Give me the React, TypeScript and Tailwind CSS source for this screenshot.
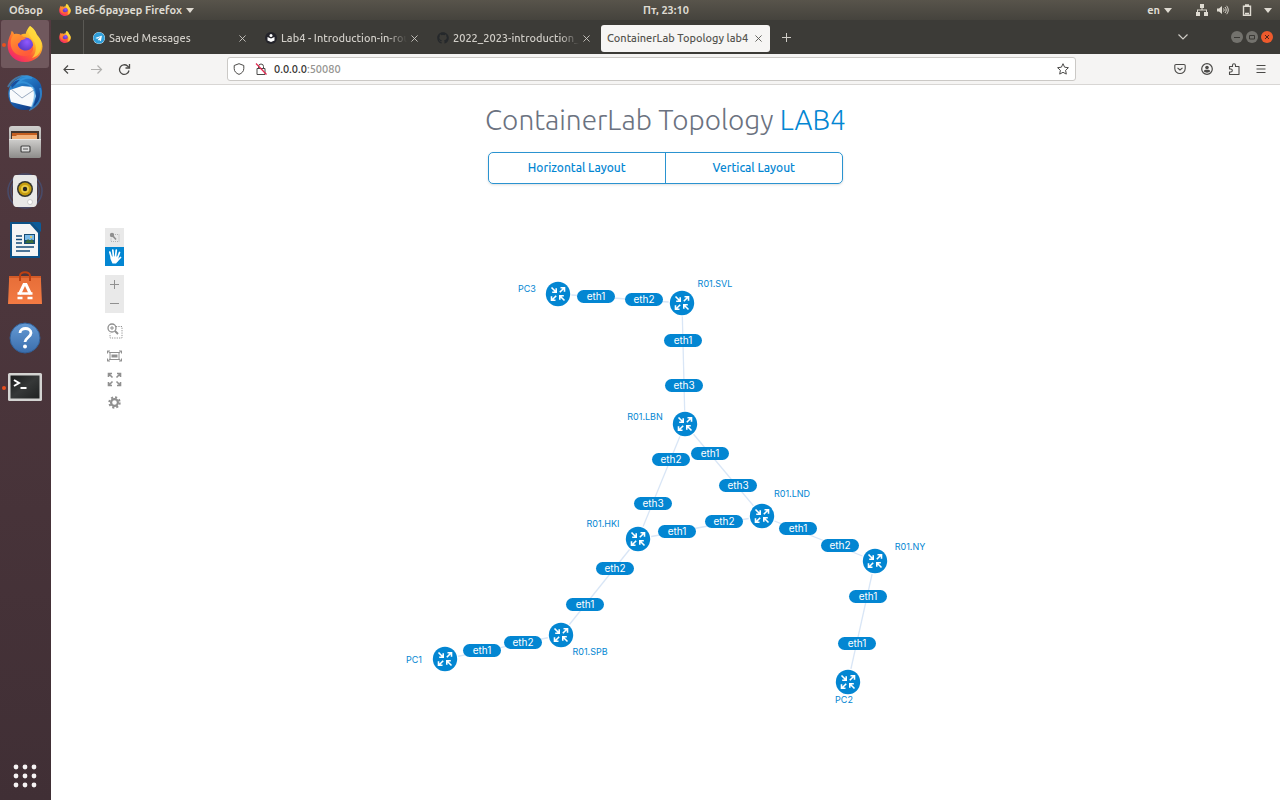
import React from "react";
import { FaGithub, FaTelegram } from "react-icons/fa";

const BLUE = "#0386d2";

type Point = { x: number; y: number };
type DeviceNode = Point & { name: string; lx: number; ly: number };

const nodes: Record<string, DeviceNode> = {
  pc3: { name: "PC3", x: 558, y: 294, lx: 527, ly: 289 },
  svl: { name: "R01.SVL", x: 682, y: 303, lx: 715, ly: 284 },
  lbn: { name: "R01.LBN", x: 685, y: 424, lx: 645, ly: 417 },
  lnd: { name: "R01.LND", x: 762, y: 516, lx: 792, ly: 494 },
  hki: { name: "R01.HKI", x: 638, y: 539, lx: 603, ly: 524 },
  ny: { name: "R01.NY", x: 875, y: 561, lx: 910, ly: 547 },
  spb: { name: "R01.SPB", x: 561, y: 635, lx: 590, ly: 652 },
  pc1: { name: "PC1", x: 445, y: 659, lx: 414, ly: 660 },
  pc2: { name: "PC2", x: 848, y: 682, lx: 844, ly: 700 },
};

const links: [string, string][] = [
  ["pc3", "svl"],
  ["svl", "lbn"],
  ["lbn", "lnd"],
  ["lbn", "hki"],
  ["hki", "lnd"],
  ["lnd", "ny"],
  ["hki", "spb"],
  ["spb", "pc1"],
  ["ny", "pc2"],
];

const ports: (Point & { name: string })[] = [
  { name: "eth1", x: 596, y: 297 },
  { name: "eth2", x: 644, y: 300 },
  { name: "eth1", x: 683, y: 341 },
  { name: "eth3", x: 684, y: 386 },
  { name: "eth1", x: 710, y: 454 },
  { name: "eth2", x: 671, y: 460 },
  { name: "eth3", x: 738, y: 486 },
  { name: "eth3", x: 653, y: 504 },
  { name: "eth2", x: 724, y: 522 },
  { name: "eth1", x: 677, y: 532 },
  { name: "eth1", x: 798, y: 529 },
  { name: "eth2", x: 840, y: 546 },
  { name: "eth2", x: 615, y: 569 },
  { name: "eth1", x: 585, y: 605 },
  { name: "eth1", x: 868, y: 597 },
  { name: "eth1", x: 857, y: 644 },
  { name: "eth2", x: 523, y: 643 },
  { name: "eth1", x: 482, y: 651 },
];

function FirefoxIcon({ id, className }: { id: string; className: string }) {
  return (
    <svg viewBox="0 0 36 36" className={className} aria-hidden="true">
      <defs>
        <linearGradient id={`${id}-body`} x1="0.85" y1="0.1" x2="0.2" y2="0.95">
          <stop offset="0" stopColor="#fff24a" />
          <stop offset="0.35" stopColor="#ffb02a" />
          <stop offset="0.65" stopColor="#ff5a36" />
          <stop offset="1" stopColor="#f0246e" />
        </linearGradient>
        <radialGradient id={`${id}-core`} cx="0.6" cy="0.3" r="0.8">
          <stop offset="0" stopColor="#9059ff" />
          <stop offset="1" stopColor="#4a2fb5" />
        </radialGradient>
        <linearGradient id={`${id}-head`} x1="0" y1="0" x2="0.5" y2="1">
          <stop offset="0" stopColor="#ff9a2e" />
          <stop offset="1" stopColor="#ff5b3a" />
        </linearGradient>
      </defs>
      <path d="M23 0c5 3 6 7 7 9 3 3 5.500 7 5.500 11.500C35.500 29 28 36 18 36S.6 28.500.6 19.500c0-5 2-9 3-11L4.600 5c1.500.6 2 2 2.600 3.200 2-.6 4-.2 6.300.8 2-1 3.500-1.400 5-1C19.500 4.500 21 2 23 0z" fill={`url(#${id}-body)`} />
      <circle cx="18.500" cy="19" r="7.600" fill={`url(#${id}-core)`} />
      <path d="M19 12c-1.400 1.600-3.200 2-5 2.200-.6 2-2 2.800-3.600 3.600 1 4.600 4.600 7 8.600 6.800 4-.2 6-2.600 6.600-5 2 4.400-1.400 10.400-8.200 10.400C9 30 4 25 3.600 17.500 3.400 13 5 10 7.200 8.200c3.800-1 6.400.4 8.800 2.600z" fill={`url(#${id}-head)`} />
      <path d="M23 0c5 3 6 7 7 9 3 3.500 5 8 4 13-1 6-5 9-9 10 4.500-5 5-12 1.500-17C23.500 10.500 19 7 23 0z" fill="#ffd83c" opacity="0.75" />
    </svg>
  );
}

function ThunderbirdIcon() {
  return (
    <svg viewBox="0 0 36 36" className="size-9" aria-hidden="true">
      <defs>
        <linearGradient id="tb" x1="0.2" y1="0" x2="0.8" y2="1">
          <stop offset="0" stopColor="#2e94dc" />
          <stop offset="0.5" stopColor="#1b62b1" />
          <stop offset="1" stopColor="#0e357e" />
        </linearGradient>
      </defs>
      <path d="M12 3C17-1 28 0 33 8c5 9 1 22-9 26-6 2-14 1-18-3C2 27 0 20 2 14c2-6 6-9 10-11z" fill="url(#tb)" />
      <path d="M3 15l12-4 11 1 3 9-4 11-9-2-12-3C3 24 2 19 3 15z" fill="#f8fafc" />
      <path d="M4 14l11 9 12-8" fill="none" stroke="#9aabc1" strokeWidth="1" />
      <path d="M1 12C6 2 17-2 25 3c-7-1-12 2-14 5 6-2 13 1 16 6 2 6 0 14-3 20 8-4 12-12 9-21" fill="none" stroke="#3d9fe3" strokeWidth="2" opacity="0.6" />
      <path d="M4 10c3-4 6-5 9-5-3 2-5 5-8 8z" fill="#1a4f9c" />
    </svg>
  );
}

function FilesIcon() {
  return (
    <svg viewBox="0 0 36 36" className="size-9" aria-hidden="true">
      <defs>
        <linearGradient id="fl" x1="0" y1="0" x2="0" y2="1">
          <stop offset="0" stopColor="#d0cfcd" />
          <stop offset="1" stopColor="#8d8c8a" />
        </linearGradient>
      </defs>
      <rect x="2" y="2" width="32" height="32" rx="3" fill="url(#fl)" />
      <rect x="4" y="7" width="28" height="8" fill="#43352e" />
      <path d="M5 9h25v6H5z" fill="#c55f20" />
      <path d="M5 12h4l1-1h20v5H5z" fill="#f2b27c" />
      <path d="M2 15h32v17a2 2 0 0 1-2 2H4a2 2 0 0 1-2-2z" fill="url(#fl)" />
      <path d="M2 15.500h32" stroke="#e8e7e5" />
      <rect x="14" y="22" width="9" height="6" rx="1" fill="#ddd" stroke="#454545" strokeWidth="1.200" />
      <path d="M16 25h5" stroke="#555" />
    </svg>
  );
}

function RhythmboxIcon() {
  return (
    <svg viewBox="0 0 36 36" className="size-9" aria-hidden="true">
      <g fill="none" stroke="#3f69ad" strokeWidth="1.500" opacity="0.4">
        <circle cx="18" cy="18" r="14" />
        <circle cx="18" cy="18" r="17" />
      </g>
      <path d="M9 2h18c3 0 3 3 3 5v22c0 4-2 5-4 5H10c-3 0-4-2-4-5V7c0-3 1-5 3-5z" fill="#e8e8e7" />
      <circle cx="18" cy="16" r="8" fill="#33352f" />
      <circle cx="18" cy="16" r="6.500" fill="#c59d10" />
      <circle cx="18" cy="16" r="4" fill="#e9cb45" />
      <circle cx="18" cy="16" r="2.200" fill="#242424" />
      <circle cx="23" cy="29" r="2.500" fill="#fff" stroke="#ccc" />
    </svg>
  );
}

function WriterIcon() {
  return (
    <svg viewBox="0 0 36 36" className="size-9" aria-hidden="true">
      <path d="M3 0h21l9 9v27H3z" fill="#0b5186" />
      <path d="M24 0h8a2 2 0 0 1 2 2v8z" fill="#0b5c99" />
      <path d="M5 2h18l8 9v23H5z" fill="#f4f5f5" />
      <path d="M9 14h6M9 17.500h6M9 21h6M9 25h18M9 29h14" stroke="#134b78" strokeWidth="1.700" />
      <rect x="17" y="12" width="11" height="10" fill="#174c73" />
      <rect x="18" y="13" width="9" height="5" fill="#79b9e8" />
      <path d="M18 21l3-4 2 2 2-2 2 4z" fill="#3b6c39" />
      <circle cx="24" cy="15" r="1" fill="#f5ce49" />
    </svg>
  );
}

function SoftwareIcon() {
  return (
    <svg viewBox="0 0 36 36" className="size-9" aria-hidden="true">
      <defs>
        <linearGradient id="sw" x1="0" y1="0" x2="0" y2="1">
          <stop offset="0" stopColor="#e66e38" />
          <stop offset="1" stopColor="#f37a43" />
        </linearGradient>
      </defs>
      <path d="M2 5h32v5l1 23H1l1-23z" fill="url(#sw)" />
      <path d="M2 6h32" stroke="#bd4718" />
      <path d="M13 10V5c0-5 10-5 10 0v5" fill="none" stroke="#bd4011" strokeWidth="2" />
      <path d="M12.500 23L17 13.500h2L23.500 23" fill="none" stroke="#fff" strokeWidth="3" />
      <path d="M10.500 22.500h15M10.500 27h5M20.500 27h5" stroke="#fff" strokeWidth="2.500" />
    </svg>
  );
}

function HelpIcon() {
  return (
    <svg viewBox="0 0 36 36" className="size-9" aria-hidden="true">
      <defs>
        <linearGradient id="hp" x1="0" y1="0" x2="0" y2="1">
          <stop offset="0" stopColor="#659bd5" />
          <stop offset="1" stopColor="#3b6eac" />
        </linearGradient>
      </defs>
      <circle cx="18" cy="18" r="15" fill="url(#hp)" stroke="#315f97" strokeWidth="1" />
      <path d="M13 13c0-6 11-6 11 0 0 4-6 5-6 9" fill="none" stroke="#fff" strokeWidth="2.800" />
      <circle cx="18" cy="26.500" r="2" fill="#fff" />
    </svg>
  );
}

function TerminalIcon() {
  return (
    <svg viewBox="0 0 36 36" className="size-9" aria-hidden="true">
      <defs>
        <linearGradient id="tm" x1="0" y1="0" x2="1" y2="1">
          <stop offset="0" stopColor="#191b1b" />
          <stop offset="0.5" stopColor="#363838" />
          <stop offset="1" stopColor="#202222" />
        </linearGradient>
      </defs>
      <rect x="1" y="4" width="34" height="28" rx="1.500" fill="#d4d4d2" />
      <rect x="3.500" y="6.500" width="29" height="23" fill="url(#tm)" />
      <path d="M7 11l5 3-5 3M13.500 19h6" fill="none" stroke="#fff" strokeWidth="2" />
    </svg>
  );
}

const dockItems = [
  { name: "Firefox", icon: <FirefoxIcon id="dock" className="size-9" />, active: true, running: true },
  { name: "Thunderbird", icon: <ThunderbirdIcon /> },
  { name: "Files", icon: <FilesIcon /> },
  { name: "Rhythmbox", icon: <RhythmboxIcon /> },
  { name: "LibreOffice Writer", icon: <WriterIcon /> },
  { name: "Ubuntu Software", icon: <SoftwareIcon /> },
  { name: "Help", icon: <HelpIcon /> },
  { name: "Terminal", icon: <TerminalIcon />, running: true },
];

function Dock() {
  return (
    <nav aria-label="Dock" className="flex w-[51px] shrink-0 flex-col bg-gradient-to-b from-[#533a40] to-[#402f35] pb-1.5">
      {dockItems.map((item) => (
        <div key={item.name} className="relative flex h-[49px] items-start px-px">
          <button
            type="button"
            aria-label={item.name}
            className={`flex size-12 items-center justify-center rounded-[3px] ${item.active ? "bg-[#70585d]" : ""}`}
          >
            {item.icon}
          </button>
          {item.running && <span className="absolute top-[23px] left-0.5 size-1 rounded-full bg-[#e9501f]" />}
        </div>
      ))}
      <button type="button" aria-label="Show applications" className="mt-auto mr-px flex h-9 items-center justify-center">
        <svg viewBox="0 0 24 24" className="size-6" fill="#f6f3f4" aria-hidden="true">
          {[3, 12, 21].map((y) => [3, 12, 21].map((x) => <circle key={`${x}-${y}`} cx={x} cy={y} r="2.400" />))}
        </svg>
      </button>
    </nav>
  );
}

function Caret() {
  return (
    <svg viewBox="0 0 8 5" className="h-[5px] w-2" fill="currentColor" aria-hidden="true">
      <path d="M0 0h8L4 5z" />
    </svg>
  );
}

function SystemBar() {
  return (
    <header className="grid h-5 shrink-0 grid-cols-[1fr_auto_1fr] items-center bg-gradient-to-b from-[#58544b] to-[#45433d] text-[11px] leading-5 font-semibold text-[#dfdbd2]">
      <div className="flex items-center">
        <button type="button" className="pl-[9px]">Обзор</button>
        <button type="button" className="ml-4 flex items-center gap-1">
          <FirefoxIcon id="bar" className="size-3" />
          Веб-браузер Firefox
          <Caret />
        </button>
      </div>
      <time className="pl-13">Пт, 23:10</time>
      <div className="flex items-center justify-end pr-2">
        <button type="button" className="mr-6 flex items-center gap-1">en <Caret /></button>
        <button type="button" aria-label="System menu" className="flex items-center gap-2">
          <svg viewBox="0 0 12 12" className="size-3" fill="currentColor" aria-hidden="true">
            <path d="M4 0h4v4H6.500v1.500H11V8h1v4H8V8h2V6.500H2V8h2v4H0V8h1V5.500h4.500V4H4z" />
          </svg>
          <svg viewBox="0 0 14 12" className="h-3 w-3.5" fill="none" stroke="currentColor" aria-hidden="true">
            <path d="M1 4.500h2L6 2v8L3 7.500H1z" fill="currentColor" stroke="none" />
            <path d="M7.500 4.500c.8 1 .8 2 0 3M9 3c1.600 2 1.600 4 0 6M10.500 1.800c2.300 2.500 2.300 5.900 0 8.400" />
          </svg>
          <svg viewBox="0 0 10 12" className="mx-1 h-3 w-2.5" fill="none" stroke="currentColor" strokeWidth="1.400" aria-hidden="true">
            <path d="M3 1h4M1.500 2.300h7v9h-7zM3 9.500h4" />
          </svg>
          <Caret />
        </button>
      </div>
    </header>
  );
}

function CloseMark() {
  return (
    <svg viewBox="0 0 8 8" className="size-[7px]" fill="none" stroke="currentColor" aria-hidden="true">
      <path d="M.5.5l7 7M7.500.5l-7 7" />
    </svg>
  );
}

function ReaderIcon() {
  return (
    <svg viewBox="0 0 12 12" className="size-3" aria-hidden="true">
      <circle cx="6" cy="6" r="6" fill="#24242a" />
      <circle cx="6" cy="3.500" r="1.500" fill="#fff" />
      <path d="M2.500 5L6 6.500 9.500 5v3.500L6 10 2.500 8.500z" fill="#fff" />
    </svg>
  );
}

const backgroundTabs = [
  { title: "Saved Messages", icon: <FaTelegram className="size-3 rounded-full bg-white text-[#2f9fda]" /> },
  { title: "Lab4 - Introduction-in-rou", icon: <ReaderIcon /> },
  { title: "2022_2023-introduction_", icon: <FaGithub className="size-3 text-[#25282b]" /> },
];

function TabStrip() {
  return (
    <div className="flex h-[34px] shrink-0 items-center bg-[#3c3b37] text-[11px] font-medium text-[#d0cdc7]">
      <button type="button" aria-label="Firefox" className="flex h-full w-[33px] shrink-0 items-center justify-center border-r border-[#5a5954] pr-1">
        <FirefoxIcon id="pin" className="size-3" />
      </button>
      <div role="tablist" aria-label="Tabs" className="flex items-center pt-0.5">
        {backgroundTabs.map((tab) => (
          <div key={tab.title} className="flex h-[27px] w-[172px] items-center pr-2.5 pl-[9px]">
            <button type="button" role="tab" aria-selected="false" className="flex min-w-0 flex-1 items-center gap-1">
              <span className="shrink-0">{tab.icon}</span>
              <span className="flex-1 overflow-hidden mask-r-from-85% text-left whitespace-nowrap">{tab.title}</span>
            </button>
            <button type="button" aria-label={`Close ${tab.title}`} className="ml-1"><CloseMark /></button>
          </div>
        ))}
        <div className="ml-px flex h-[27px] w-[169px] items-center rounded-[3px] bg-[#f6f5f4] px-1.5 text-[#55544f]">
          <button type="button" role="tab" aria-selected="true" className="flex-1 text-left whitespace-nowrap">
            ContainerLab Topology lab4
          </button>
          <button type="button" aria-label="Close ContainerLab Topology lab4" className="mx-0.5"><CloseMark /></button>
        </div>
      </div>
      <button type="button" aria-label="New tab" className="ml-3">
        <svg viewBox="0 0 9 9" className="size-[9px]" stroke="currentColor" aria-hidden="true"><path d="M4.500 0v9M0 4.500h9" /></svg>
      </button>
      <div className="ml-auto flex items-center gap-[3px] pr-[7px]">
        <button type="button" aria-label="List all tabs" className="mr-10">
          <svg viewBox="0 0 10 6" className="h-1.5 w-2.5" fill="none" stroke="currentColor" strokeWidth="1.200" aria-hidden="true"><path d="M.5.5L5 5 9.500.5" /></svg>
        </button>
        <button type="button" aria-label="Minimise" className="flex size-3 items-center justify-center rounded-full bg-[#73726d]">
          <svg viewBox="0 0 12 12" className="size-3" stroke="#3a3935" aria-hidden="true"><path d="M3 6.500h6" /></svg>
        </button>
        <button type="button" aria-label="Maximise" className="flex size-3 items-center justify-center rounded-full bg-[#73726d]">
          <svg viewBox="0 0 12 12" className="size-3" fill="none" stroke="#3a3935" aria-hidden="true"><path d="M3.500 4.500h5v3.500h-5z" /></svg>
        </button>
        <button type="button" aria-label="Close window" className="flex size-3 items-center justify-center rounded-full bg-[#ee5a2c]">
          <svg viewBox="0 0 12 12" className="size-3" stroke="#52261a" aria-hidden="true"><path d="M4 4l4 4M8 4L4 8" /></svg>
        </button>
      </div>
    </div>
  );
}

function AddressBar() {
  const icon = "h-3.5 w-3.5";
  return (
    <div className="flex h-[31px] shrink-0 items-center border-b border-[#d8d6d4] bg-[#f5f4f3] text-[#4b4a48]">
      <div className="flex w-[176px] items-center gap-3.5 pl-[11px]">
        <button type="button" aria-label="Back">
          <svg viewBox="0 0 14 14" className={icon} fill="none" stroke="currentColor" strokeWidth="1.200" aria-hidden="true"><path d="M12.500 7.500H2M6 3.500L2 7.500l4 4" /></svg>
        </button>
        <button type="button" aria-label="Forward" className="text-[#b1b0ae]">
          <svg viewBox="0 0 14 14" className={icon} fill="none" stroke="currentColor" strokeWidth="1.200" aria-hidden="true"><path d="M1 7.500h10.500M7.500 3.500l4 4-4 4" /></svg>
        </button>
        <button type="button" aria-label="Reload">
          <svg viewBox="0 0 14 14" className={icon} fill="none" stroke="currentColor" strokeWidth="1.300" aria-hidden="true"><path d="M11 8.500A4.800 4.800 0 1 1 9.500 4L11 5.500" /><path d="M11.500 2v4H7.500" /></svg>
        </button>
      </div>
      <div className="flex h-6 min-w-0 flex-1 items-center rounded-[3px] border border-[#cbc9c6] bg-white pr-1.5 pl-[5px]">
        <svg viewBox="0 0 12 12" className="size-3" fill="none" stroke="currentColor" aria-hidden="true"><path d="M6 .7l4.800 1.800v3c0 3-2 4.800-4.800 5.900C3.200 10.300 1.200 8.500 1.200 5.500v-3z" /></svg>
        <svg viewBox="0 0 12 12" className="ml-2.5 size-3" fill="none" stroke="currentColor" aria-hidden="true">
          <path d="M3.500 5V3.500a2.500 2.500 0 0 1 5 0V5M2 5.500h8v6H2z" />
          <path d="M1 .5l10.500 11" stroke="#e22850" strokeWidth="1.200" />
        </svg>
        <div className="ml-[7px] grid min-w-0 flex-1 items-center text-[11px] leading-4">
          <input aria-label="Address" defaultValue="0.0.0.0:50080" className="col-start-1 row-start-1 w-full bg-transparent text-transparent caret-[#333] outline-none" />
          <span aria-hidden="true" className="pointer-events-none col-start-1 row-start-1 font-medium text-[#343331]">0.0.0.0<span className="text-[#949390]">:50080</span></span>
        </div>
        <button type="button" aria-label="Bookmark this page">
          <svg viewBox="0 0 12 12" className="size-3" fill="none" stroke="currentColor" strokeLinejoin="round" aria-hidden="true"><path d="M6 .7l1.600 3.500 3.800.5-2.800 2.600.7 3.800L6 9.300l-3.300 1.800.7-3.800L.6 4.700l3.800-.5z" /></svg>
        </button>
      </div>
      <div className="flex w-[204px] items-center justify-end gap-[15px] pr-[13px]">
        <button type="button" aria-label="Save to Pocket">
          <svg viewBox="0 0 12 12" className="size-3" fill="none" stroke="currentColor" strokeWidth="1.100" aria-hidden="true"><path d="M2 1.500h8q1.200 0 1.200 1.200V5.500a5.200 5 0 0 1-10.400 0V2.700Q.8 1.500 2 1.500z" /><path d="M3.500 4.800L6 7l2.500-2.200" /></svg>
        </button>
        <button type="button" aria-label="Account">
          <svg viewBox="0 0 12 12" className="size-3" aria-hidden="true"><circle cx="6" cy="6" r="5.300" fill="none" stroke="currentColor" strokeWidth="1.200" /><circle cx="6" cy="4.500" r="1.800" fill="currentColor" /><path d="M2.800 8.500C3 6.800 4 6.800 6 6.800s3 0 3.200 1.700C7.500 10 4.500 10 2.800 8.500z" fill="currentColor" /></svg>
        </button>
        <button type="button" aria-label="Extensions">
          <svg viewBox="0 0 12 12" className="size-3" fill="none" stroke="currentColor" strokeWidth="1.100" strokeLinejoin="round" aria-hidden="true"><path d="M4.500 3.500V2.300a1.500 1.500 0 0 1 3 0v1.200H11v8H1.500V9h1.300a1.500 1.500 0 0 0 0-3H1.500V3.500z" /></svg>
        </button>
        <button type="button" aria-label="Application menu">
          <svg viewBox="0 0 12 12" className="size-3" stroke="currentColor" strokeWidth="1.100" aria-hidden="true"><path d="M1.500 2.500h9M1.500 6h9M1.500 9.500h9" /></svg>
        </button>
      </div>
    </div>
  );
}

function CanvasTools() {
  return (
    <div role="toolbar" aria-label="Topology tools" className="flex w-[19px] shrink-0 flex-col text-[#909090]">
      <button type="button" aria-label="Select mode" className="flex h-[19px] items-center justify-center bg-[#e9e9e9]">
        <svg viewBox="0 0 13 13" className="size-[13px]" fill="none" stroke="currentColor" aria-hidden="true"><path d="M5 3.500h6v7H3V7" strokeDasharray="1 1" stroke="#b5b5b5" /><circle cx="4" cy="4" r="2.200" fill="currentColor" stroke="none" /><path d="M4 4l4 4.500" strokeWidth="1.700" /></svg>
      </button>
      <button type="button" aria-label="Move mode" className="flex h-[19px] items-center justify-center bg-[#0386d2]">
        <svg viewBox="0 0 15 17" className="h-[17px] w-[15px]" aria-hidden="true">
          <path d="M4.500 10L2.800 4M6.500 9L5.800 2M8.500 9L9.300 2M10.500 10L12.500 4.500M10.500 12.500L13.500 9.500" fill="none" stroke="#fff" strokeWidth="1.700" strokeLinecap="round" />
          <path d="M3.700 8.500h7.500v4.500L9 15.500H5.500L3.500 11z" fill="#fff" />
        </svg>
      </button>
      <div className="mt-[9px] flex flex-col bg-[#e9e9e9]">
        <button type="button" aria-label="Zoom in" className="flex h-[19px] items-center justify-center">
          <svg viewBox="0 0 9 9" className="size-[9px]" stroke="currentColor" aria-hidden="true"><path d="M4.500 0v9M0 4.500h9" /></svg>
        </button>
        <button type="button" aria-label="Zoom out" className="flex h-[19px] items-center justify-center">
          <svg viewBox="0 0 9 9" className="size-[9px]" stroke="currentColor" aria-hidden="true"><path d="M0 4.500h9" /></svg>
        </button>
      </div>
      <button type="button" aria-label="Zoom to selection" className="mt-[7px] flex h-5 items-center justify-center">
        <svg viewBox="0 0 17 17" className="size-[17px]" fill="none" stroke="currentColor" aria-hidden="true"><path d="M10 4.500h6v11.500H4V11.500" strokeDasharray="1.200 1.200" /><circle cx="6" cy="6" r="4" strokeWidth="1.300" /><path d="M9 9l3 3" strokeWidth="2" /><path d="M4 6h4M6 4v4" /></svg>
      </button>
      <button type="button" aria-label="Fit stage" className="mt-2 flex h-4 items-center justify-center">
        <svg viewBox="0 0 17 12" className="h-3 w-[17px]" fill="none" stroke="currentColor" aria-hidden="true"><path d="M1.500 3.500V1H4M1.500 1l2.500 2M15.500 3.500V1H13M15.500 1L13 3M1.500 8.500V11H4M1.500 11L4 9M15.500 8.500V11H13M15.500 11L13 9" /><path d="M4 2.500h9v7H4z" /><path d="M5.500 4.500h6v3h-6z" fill="currentColor" stroke="none" /></svg>
      </button>
      <button type="button" aria-label="Full screen" className="mt-[7px] flex h-4 items-center justify-center">
        <svg viewBox="0 0 15 15" className="size-[15px]" fill="none" stroke="currentColor" strokeWidth="1.600" aria-hidden="true"><path d="M1.500 5V1.500H5M1.500 1.500L5.500 5.500M10 1.500h3.500V5M13.500 1.500L9.500 5.500M1.500 10v3.500H5M1.500 13.500L5.500 9.500M13.500 10v3.500H10M13.500 13.500L9.500 9.500" /></svg>
      </button>
      <button type="button" aria-label="Settings" className="mt-[7px] flex h-4 items-center justify-center">
        <svg viewBox="0 0 13 13" className="size-[13px]" fill="none" stroke="currentColor" aria-hidden="true"><circle cx="6.500" cy="6.500" r="3.400" strokeWidth="2.200" /><circle cx="6.500" cy="6.500" r="5.200" strokeWidth="2" strokeDasharray="2.080 2" /></svg>
      </button>
    </div>
  );
}

function Router({ x, y }: Point) {
  return (
    <g transform={`translate(${x} ${y})`}>
      <circle r="13.500" fill="#fff" />
      <circle r="12.200" fill={BLUE} />
      <g fill="none" stroke="#fff" strokeWidth="1.600">
        <path d="M-6.500-6.500l4.500 4.500M-1.800-5.800V-1.800H-5.800" />
        <path d="M1.800-1.800L6.300-6.300M2.500-6.300H6.500V-2.300" />
        <path d="M-1.800 1.800L-6.300 6.300M-2.500 6.300H-6.500V2.300" />
        <path d="M6.500 6.500L2 2M1.800 5.800V1.800H5.800" />
      </g>
    </g>
  );
}

function Topology() {
  return (
    <svg viewBox="124 228 1102 500" preserveAspectRatio="xMidYMin meet" className="min-w-0 flex-1 font-['Inter','Liberation_Sans',sans-serif]" role="img" aria-label="Network topology">
      <g stroke="#d9e6f6" strokeWidth="1.300">
        {links.map(([from, to]) => (
          <line key={`${from}-${to}`} x1={nodes[from].x} y1={nodes[from].y} x2={nodes[to].x} y2={nodes[to].y} />
        ))}
      </g>
      {Object.values(nodes).map((node) => (
        <g key={node.name}>
          <Router x={node.x} y={node.y} />
          <text x={node.lx} y={node.ly + 3} textAnchor="middle" fill={BLUE} className="text-[9px]">{node.name}</text>
        </g>
      ))}
      {ports.map((port) => (
        <g key={`${port.x}-${port.y}`}>
          <rect x={port.x - 19} y={port.y - 7} width="38" height="13" rx="6.500" fill={BLUE} />
          <text x={port.x} y={port.y + 3} textAnchor="middle" fill="#fff" className="text-[10px]">{port.name}</text>
        </g>
      ))}
    </svg>
  );
}

export default function App() {
  return (
    <div className="flex min-h-screen flex-col bg-white font-['Ubuntu','Open_Sans','Noto_Sans',sans-serif]">
      <SystemBar />
      <div className="flex flex-1">
        <Dock />
        <div className="flex min-w-0 flex-1 flex-col">
          <TabStrip />
          <AddressBar />
          <main className="flex flex-1 flex-col items-center pt-[15px]">
            <h1 className="text-[28px] leading-10 font-light text-[#6b7280]">
              ContainerLab Topology <span className="text-[#0386d2]">LAB4</span>
            </h1>
            <div className="mt-3 grid w-[355px] grid-cols-2 rounded-[5px] border border-[#2a93d0] text-xs font-medium text-[#0386d2] shadow-sm">
              <button type="button" className="h-[30px] border-r border-[#2a93d0]">Horizontal Layout</button>
              <button type="button" className="h-[30px]">Vertical Layout</button>
            </div>
            <section aria-label="Topology" className="mt-11 flex w-full items-start px-[54px]">
              <CanvasTools />
              <Topology />
            </section>
          </main>
        </div>
      </div>
    </div>
  );
}
